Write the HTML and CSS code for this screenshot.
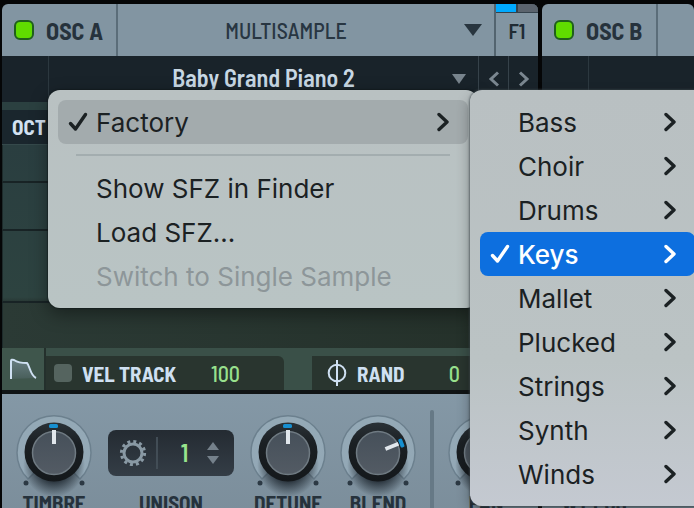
FILE: index.html
```html
<!DOCTYPE html>
<html lang="en">
<head>
<meta charset="utf-8">
<title>Oscillators</title>
<link rel="stylesheet" href="styles.css">
</head>
<body>
<svg class="defs" aria-hidden="true">
  <defs>
    <linearGradient id="ring" x1="0" y1="0" x2="0" y2="1"><stop offset="0" stop-color="#94a9b6"/><stop offset="1" stop-color="#93a8b6"/></linearGradient>
    <linearGradient id="body" x1="0" y1="0" x2="0" y2="1"><stop offset="0" stop-color="#2a3136"/><stop offset=".35" stop-color="#1b2024"/><stop offset="1" stop-color="#14181b"/></linearGradient>
    <linearGradient id="cap" x1="0" y1="0" x2="0" y2="1"><stop offset="0" stop-color="#46505a"/><stop offset="1" stop-color="#535b64"/></linearGradient>
    <radialGradient id="shade"><stop offset=".45" stop-color="#1c252d" stop-opacity=".95"/><stop offset="1" stop-color="#1c252d" stop-opacity="0"/></radialGradient>
    <symbol id="knob" viewBox="0 0 90 90">
      <path d="M19 71A37 37 0 1 1 71 71L45 45Z" fill="url(#ring)" stroke="#6c808e" stroke-width="1.5"/>
      <ellipse cx="45" cy="57" rx="31" ry="32" fill="url(#shade)"/>
      <circle cx="17" cy="75" r="2.5" fill="#2c3944"/><circle cx="73" cy="75" r="2.5" fill="#2c3944"/>
      <circle cx="45" cy="44" r="29.5" fill="url(#body)"/>
      <circle cx="45" cy="45" r="21.5" fill="url(#cap)" stroke="#6f7a82" stroke-width="1.5"/>
    </symbol>
    <symbol id="chev" viewBox="0 0 12 20"><path d="M2 2.500L10 10L2 17.500" fill="none" stroke="currentColor" stroke-width="3.400" stroke-linecap="round" stroke-linejoin="round"/></symbol>
    <symbol id="check" viewBox="0 0 20 20"><path d="M2.500 11.500L7.500 17L17.500 2.500" fill="none" stroke="currentColor" stroke-width="3.400" stroke-linecap="round" stroke-linejoin="round"/></symbol>
  </defs>
</svg>

<main class="synth">
  <section class="osc">
    <header class="head">
      <label class="power"><input type="checkbox" checked>OSC A</label>
      <button class="type"><span>MULTISAMPLE</span><svg viewBox="0 0 18 12"><path d="M0 0H18L9 12Z" fill="#28353f"/></svg></button>
      <button class="filter"><span class="slots"><i></i><i></i></span><span>F1</span></button>
    </header>
    <div class="preset">
      <span class="side"></span>
      <button class="name"><span>Baby Grand Piano 2</span><svg viewBox="0 0 14 10"><path d="M0 0H14L7 10Z" fill="#78848d"/></svg></button>
      <button class="step" aria-label="Previous"><svg viewBox="0 0 12 16"><path d="M10 1.500L3 8L10 14.500"/></svg></button>
      <button class="step" aria-label="Next"><svg viewBox="0 0 12 16"><path d="M2 1.500L9 8L2 14.500"/></svg></button>
    </div>
    <div class="pitch">OCT</div>
    <div class="map"><span></span><span></span><span></span><span></span></div>
    <div class="options">
      <button class="env" aria-label="Envelope"><svg viewBox="0 0 28 22"><defs><linearGradient id="e" x1="0" y1="0" x2="0" y2="1"><stop offset="0" stop-color="#687e82"/><stop offset="1" stop-color="#485e5a"/></linearGradient></defs><path d="M2 21V3Q2 1 5 2C8 4 10 5 18 5C21 8 21 17 27 20" fill="url(#e)" stroke="#cfe0f2" stroke-width="2"/></svg></button>
      <label class="vel"><input type="checkbox"><span>VEL TRACK</span><output>100</output></label>
      <div class="rand"><svg viewBox="0 0 20 26"><path d="M10 0V26" /><circle cx="10" cy="13" r="8.300"/></svg><span>RAND</span><output>0</output></div>
    </div>
    <div class="knobs">
      <label class="knob"><svg viewBox="0 0 90 90"><use href="#knob"/><rect x="40" y="16" width="9" height="4" rx="1.500" fill="#168fd0"/><path d="M45 22V36" stroke="#e1e7ec" stroke-width="4"/></svg><input type="range">TIMBRE</label>
      <div class="unison">
        <div class="voices">
          <button aria-label="Unison settings"><svg class="gear" viewBox="0 0 28 28"><circle cx="14" cy="14" r="9" fill="none" stroke="#8999a4" stroke-width="3"/><circle cx="14" cy="14" r="11.600" fill="none" stroke="#8999a4" stroke-width="3" stroke-dasharray="3 3.070"/></svg></button>
          <output>1</output>
          <span class="spin"><button aria-label="More voices"><svg viewBox="0 0 12 8"><path d="M0 8L6 0L12 8Z"/></svg></button><button aria-label="Fewer voices"><svg viewBox="0 0 12 8"><path d="M0 0L6 8L12 0Z"/></svg></button></span>
        </div>
        UNISON
      </div>
      <label class="knob"><svg viewBox="0 0 90 90"><use href="#knob"/><rect x="40" y="16" width="9" height="4" rx="1.500" fill="#168fd0"/><path d="M45 22V36" stroke="#e1e7ec" stroke-width="4"/></svg><input type="range">DETUNE</label>
      <label class="knob"><svg viewBox="0 0 90 90"><use href="#knob"/><g transform="rotate(68 45 44)"><rect x="41" y="17" width="9" height="4" rx="1.500" fill="#168fd0"/><path d="M45 22V36" stroke="#e1e7ec" stroke-width="4"/></g></svg><input type="range">BLEND</label>
      <span class="rule"></span>
      <label class="knob"><svg viewBox="0 0 90 90"><use href="#knob"/></svg><input type="range">PAN</label>
    </div>
  </section>

  <section class="osc">
    <header class="head">
      <label class="power"><input type="checkbox" checked>OSC B</label>
      <span class="type"></span>
    </header>
    <div class="preset"><span class="side"></span></div>
    <div class="pitch"></div>
    <div class="map"><span></span><span></span><span></span><span></span></div>
    <div class="options"></div>
    <div class="knobs">
      <label class="knob"><svg viewBox="0 0 90 90"><use href="#knob"/></svg><input type="range">WT POS</label>
    </div>
  </section>
</main>

<div class="menu main-menu" role="menu">
  <button class="item open" role="menuitem"><svg class="tick"><use href="#check"/></svg><span>Factory</span><svg class="more"><use href="#chev"/></svg></button>
  <hr>
  <button class="item" role="menuitem"><span>Show SFZ in Finder</span></button>
  <button class="item" role="menuitem"><span>Load SFZ...</span></button>
  <button class="item" role="menuitem" disabled><span>Switch to Single Sample</span></button>
</div>

<div class="menu sub-menu" role="menu">
  <button class="item" role="menuitem"><span>Bass</span><svg class="more"><use href="#chev"/></svg></button>
  <button class="item" role="menuitem"><span>Choir</span><svg class="more"><use href="#chev"/></svg></button>
  <button class="item" role="menuitem"><span>Drums</span><svg class="more"><use href="#chev"/></svg></button>
  <button class="item active" role="menuitem"><svg class="tick"><use href="#check"/></svg><span>Keys</span><svg class="more"><use href="#chev"/></svg></button>
  <button class="item" role="menuitem"><span>Mallet</span><svg class="more"><use href="#chev"/></svg></button>
  <button class="item" role="menuitem"><span>Plucked</span><svg class="more"><use href="#chev"/></svg></button>
  <button class="item" role="menuitem"><span>Strings</span><svg class="more"><use href="#chev"/></svg></button>
  <button class="item" role="menuitem"><span>Synth</span><svg class="more"><use href="#chev"/></svg></button>
  <button class="item" role="menuitem"><span>Winds</span><svg class="more"><use href="#chev"/></svg></button>
</div>
</body>
</html>
```

FILE: styles.css
```css
* { box-sizing: border-box; }
body {
  margin: 0;
  height: 100vh;
  overflow: hidden;
  position: relative;
  background: #050607;
  font-family: "Barlow Semi Condensed", "Barlow Condensed", "Roboto Condensed", "Liberation Sans Narrow", "Liberation Sans", sans-serif;
  font-size: 21px;
  font-weight: 700;
  color: #26323c;
}
button { border: 0; padding: 0; margin: 0; background: none; font: inherit; color: inherit; }
input { margin: 0; appearance: none; }
svg { display: block; }
.defs { position: absolute; width: 0; height: 0; }

.synth {
  display: grid;
  grid-template-columns: 67fr 19fr;
  gap: 4px;
  padding: 4px 0 0 2px;
}
.osc { min-width: 0; overflow: hidden; border-radius: 6px 6px 0 0; }

.head { display: flex; height: 52px; background: #8295a2; }
.power {
  flex: none;
  display: flex;
  align-items: center;
  gap: 12px;
  width: 116px;
  padding-left: 12px;
  border-right: 2px solid #5b6d79;
  font-size: 24px;
}
.power input {
  width: 20px;
  height: 20px;
  border: 2px solid #205f1c;
  border-radius: 6px;
  background: #60dc00;
}
.type { flex: 1; display: flex; align-items: center; padding-right: 12px; font-size: 22px; font-weight: 500; color: #283642; }
.type span { flex: 1; text-align: center; padding-right: 10px; }
.type svg { width: 18px; height: 12px; }
.filter {
  width: 44px;
  display: flex;
  flex-direction: column;
  border-left: 2px solid #53646f;
  font-weight: 600;
  color: #202b34;
}
.filter > span:last-child { flex: 1; display: grid; place-items: center; padding-bottom: 8px; }
.slots { display: flex; gap: 2px; height: 9px; border-bottom: 1px solid #34424c; background: #34424c; }
.slots i { flex: 1; background: #00aaff; }
.slots i + i { background: #5b646e; }

.preset { display: flex; height: 46px; background: #19232a; color: #c8d8e4; }
.side { width: 47px; border-right: 1px solid #2c383f; }
.name { flex: 1; display: flex; align-items: center; padding-right: 12px; font-size: 24px; font-weight: 600; }
.name span { flex: 1; text-align: center; padding: 0 0 4px 26px; }
.name svg { width: 14px; height: 10px; }
.step { width: 30px; border-left: 1px solid #36424a; display: grid; place-items: center; }
.step svg { width: 12px; height: 16px; fill: none; stroke: #7b8790; stroke-width: 3; }

.pitch {
  height: 43px;
  border-top: 8px solid #2b4040;
  border-bottom: 1px solid #35494b;
  padding-left: 10px;
  line-height: 34px;
  background: #1a262d;
  color: #d3e2f2;
}
.map { display: grid; grid-template-rows: 38px 48px 72px 45px; background: linear-gradient(#2a3e40, #2d4340 75%, #26332f 78%); }
.map span { border-bottom: 2px solid #182325; border-left: 1px solid #1d2b2b; }
.map span:last-child { border-bottom: 0; background: linear-gradient(90deg, #2b3a35, #243029); }

.options {
  display: flex;
  height: 46px;
  border-bottom: 4px solid #101415;
  background: #3a5048;
  color: #cfe0f2;
}
.options input { width: 18px; height: 18px; border-radius: 4px; background: #55645f; }
.options output { margin-left: auto; color: #98e08d; font-weight: 500; font-size: 22px; }
.env { width: 44px; padding-left: 7px; border-right: 2px solid #24302c; display: flex; align-items: center; background: #3f564c; }
.env svg { width: 28px; height: 22px; }
.vel, .rand {
  display: flex;
  align-items: center;
  gap: 10px;
  margin-top: 8px;
  background: #29352f;
}
.vel { width: 238px; padding: 0 44px 0 8px; border-radius: 0 6px 0 0; }
.rand { flex: 1; margin-left: 28px; padding: 0 78px 0 15px; }
.rand svg { width: 20px; height: 26px; fill: none; stroke: #cfe0f2; stroke-width: 2; }

.knobs {
  display: flex;
  align-items: flex-start;
  padding: 14px 7px 0;
  background: linear-gradient(#8498a6, #7a8c99);
}
.knob { position: relative; flex: none; width: 90px; padding-bottom: 20px; text-align: center; line-height: 20px; }
.knob svg { width: 90px; height: 90px; margin-bottom: -5px; }
.knob input { position: absolute; inset: 0; width: 100%; height: 100%; opacity: 0; }
.unison { flex: none; width: 126px; margin: 22px 9px 0; text-align: center; line-height: 20px; }
.voices {
  display: flex;
  align-items: center;
  height: 46px;
  margin-bottom: 17px;
  padding: 0 15px 0 11px;
  border-radius: 8px;
  background: linear-gradient(#242b32, #343d46);
}
.voices > button { padding-right: 9px; border-right: 2px solid #424d56; }
.gear { width: 28px; height: 32px; }
.voices output { flex: 1; padding-left: 4px; color: #98e58d; font-size: 24px; font-weight: 600; }
.spin { display: grid; gap: 6px; }
.spin svg { width: 12px; height: 8px; fill: #75818b; }
.rule { flex: none; width: 4px; height: 110px; margin: 2px 7px 0 7px; background: #667986; border-radius: 2px; }

.menu {
  position: absolute;
  top: 90px;
  padding: 10px;
  border-radius: 12px;
  font-family: Inter, sans-serif;
  font-weight: 400;
  font-size: 26px;
  color: #1b2123;
}
.main-menu { left: 48px; width: 430px; background: linear-gradient(#b9c1c2, #b9c4c4); box-shadow: 0 0 1px 1px #10181a80, 0 6px 18px #0006; }
.sub-menu { left: 470px; width: 235px; background: linear-gradient(#b9c0c2, #bbc3c4 65%, #c4c9d1); box-shadow: 0 0 2px 1px #3e484c99, 0 6px 14px #0005; }
.item { display: flex; align-items: center; width: 100%; height: 44px; padding: 0 19px 0 38px; border-radius: 8px; text-align: left; }
.item span { flex: 1; }
.item:disabled { color: #8d9699; }
.item.open { background: #a3abad; }
.item.active { background: #0d6fdf; color: #fff; font-weight: 500; }
.tick { width: 20px; height: 20px; margin-left: -28px; margin-right: 8px; }
.more { width: 12px; height: 20px; }
.menu hr { height: 2px; margin: 10px 18px; border: 0; background: #a3adaf; }
```
